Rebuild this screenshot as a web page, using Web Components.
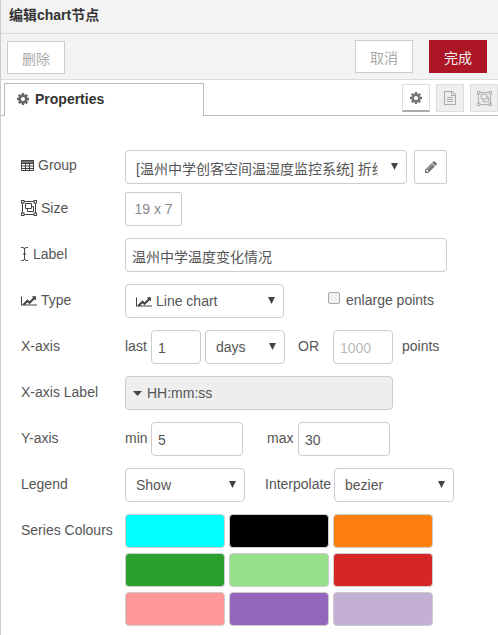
<!DOCTYPE html>
<html>
<head>
<meta charset="utf-8">
<title>编辑chart节点</title>
<style>
  html, body { margin: 0; padding: 0; background: #fff; }
  body { font-family: "Liberation Sans", "Noto Sans CJK SC", Arial, sans-serif; font-size: 14px; color: #555; }
</style>
</head>
<body>
<chart-tray>
  <tray-header slot="header">编辑chart节点</tray-header>
  <tray-toolbar slot="toolbar">
    <tray-button style="margin-top:1px">删除</tray-button>
    <span style="flex:1"></span>
    <tray-button>取消</tray-button>
    <tray-button primary style="margin-left:16px">完成</tray-button>
  </tray-toolbar>
  <tab-bar slot="tabs" label="Properties"></tab-bar>

  <form-row label="Group" icon="table" style="margin-bottom:8px;--label-top:5px">
    <field-select width="282" inner="242" style="--text-top:1px">[温州中学创客空间温湿度监控系统] 折线图</field-select>
    <icon-button style="margin-left:7px"><fa-icon name="pencil" size="14" color="#777"></fa-icon></icon-button>
  </form-row>
  <form-row label="Size" icon="group">
    <size-button>19 x 7</size-button>
  </form-row>
  <form-row label="Label" icon="cursor" style="--label-gap:5px">
    <field-input width="322" pad="6">温州中学温度变化情况</field-input>
  </form-row>
  <form-row label="Type" icon="chart">
    <field-select width="159"><fa-icon name="chart" size="14" color="#444" style="margin-right:4px"></fa-icon>Line chart</field-select>
    <check-label style="margin-left:44px">enlarge points</check-label>
  </form-row>
  <form-row label="X-axis">
    <inline-text width="26">last</inline-text>
    <field-input width="50">1</field-input>
    <field-select width="80" style="margin-left:4px">days</field-select>
    <inline-text width="48" style="padding-left:13px">OR</inline-text>
    <field-input width="60" placeholder>1000</field-input>
    <inline-text style="padding-left:9px">points</inline-text>
  </form-row>
  <form-row label="X-axis Label">
    <typed-field>HH:mm:ss</typed-field>
  </form-row>
  <form-row label="Y-axis">
    <inline-text width="26">min</inline-text>
    <field-input width="92">5</field-input>
    <inline-text width="55" style="padding-left:24px">max</inline-text>
    <field-input width="92">30</field-input>
  </form-row>
  <form-row label="Legend">
    <field-select width="120">Show</field-select>
    <inline-text width="89" style="padding-left:20px">Interpolate</inline-text>
    <field-select width="120">bezier</field-select>
  </form-row>
  <form-row label="Series Colours">
    <colour-grid colours="#00ffff,#000000,#ff7f0e,#2ca02c,#98df8a,#d62728,#ff9896,#9467bd,#c5b0d5"></colour-grid>
  </form-row>
</chart-tray>

<script>
const ICONS = {
  cog: ['0 0 1792 1792', '<path d="M1152 896q0-106-75-181t-181-75-181 75-75 181 75 181 181 75 181-75 75-181zm512-109v222q0 12-8 23t-20 13l-185 28q-19 54-39 91 35 50 107 138 10 12 10 25t-9 23q-27 37-99 108t-94 71q-12 0-26-9l-138-108q-44 23-91 38-16 136-29 186-7 28-36 28h-222q-14 0-24.500-8.500t-11.500-21.500l-28-184q-49-16-90-37l-141 107q-10 9-25 9-14 0-25-11-126-114-165-168-7-10-7-23 0-12 8-23 15-21 51-66.500t54-70.500q-27-50-41-99l-183-27q-13-2-21-12.500t-8-23.500v-222q0-12 8-23t19-13l186-28q14-46 39-92-40-57-107-138-10-12-10-24 0-10 9-23 26-36 98.500-107.500t94.500-71.500q13 0 26 10l138 107q44-23 91-38 16-136 29-186 7-28 36-28h222q14 0 24.500 8.500t11.500 21.500l28 184q49 16 90 37l142-107q9-9 24-9 13 0 25 10 129 119 165 170 7 8 7 22 0 12-8 23-15 21-51 66.500t-54 70.500q26 50 41 98l183 28q13 2 21 12.500t8 23.500z"/>'],
  chart: ['0 0 2048 1792', '<path d="M2048 1472v128h-2048v-1152h128v1024h1920zm-128-1024v435q0 21-19.500 29.500t-35.500-7.500l-121-121-633 633q-10 10-23 10t-23-10l-233-233-416 416-192-192 585-585q10-10 23-10t23 10l233 233 464-464-121-121q-16-16-7.500-35.500t29.500-19.500h435q14 0 23 9t9 23z"/>'],
  pencil: ['0 0 1792 1792', '<path d="M491 1536l91-91-235-235-91 91v107h128v128h107zm523-928q0-22-22-22-10 0-17 7l-542 542q-7 7-7 17 0 22 22 22 10 0 17-7l542-542q7-7 7-17zm-54-192l416 416-832 832h-416v-416zm683 96q0 53-37 90l-166 166-416-416 166-165q36-38 90-38 53 0 91 38l235 234q37 39 37 91z"/>'],
  file: ['0 0 1792 1792', '<path d="M1596 380q28 28 48 76t20 88v1152q0 40-28 68t-68 28h-1344q-40 0-68-28t-28-68v-1600q0-40 28-68t68-28h896q40 0 88 20t76 48zm-444-244v376h376q-10-29-22-41l-313-313q-12-12-41-22zm384 1528v-1024h-416q-40 0-68-28t-28-68v-416h-768v1536h1280zm-1024-864q0-14 9-23t23-9h704q14 0 23 9t9 23v64q0 14-9 23t-23 9h-704q-14 0-23-9t-9-23v-64zm736 224q14 0 23 9t9 23v64q0 14-9 23t-23 9h-704q-14 0-23-9t-9-23v-64q0-14 9-23t23-9h704zm0 256q14 0 23 9t9 23v64q0 14-9 23t-23 9h-704q-14 0-23-9t-9-23v-64q0-14 9-23t23-9h704z"/>'],
  table: ['0 0 13 11', '<path fill="none" stroke="currentColor" d="M.5 .5h12v10H.5zM.5 3.500h12M.5 6h12M.5 8.500h12M4.500 3.500v7M8.500 3.500v7"/><path d="M0 0h13v3H0z" opacity=".75"/>'],
  group: ['0 0 16 16', '<path fill="none" stroke="currentColor" d="M1.500 1.500h13v13h-13z"/><path fill="none" stroke="currentColor" d="M4.500 3.500h6v5h-6zM6.500 8.500v3h6v-5h-2"/><path d="M0 0h3.500v3.500H0zM12.500 0H16v3.500h-3.500zM0 12.500h3.500V16H0zM12.500 12.500H16V16h-3.500z"/><path fill="#fff" d="M1 1h1.500v1.500H1zM13.500 1H15v1.500h-1.500zM1 13.500h1.500V15H1zM13.500 13.500H15V15h-1.500z"/>'],
  cursor: ['0 0 7 14', '<path fill="none" stroke="currentColor" d="M0 .5h1.500q2 0 2 1.500v10q0 1.500-2 1.500H0M7 .5H5.500q-2 0-2 1.500v10q0 1.500 2 1.500H7M2 7h3"/>']
};

class FaIcon extends HTMLElement {
  constructor() {
    super();
    this.attachShadow({ mode: 'open' });
  }

  connectedCallback() {
    const [viewBox, body] = ICONS[this.getAttribute('name')];
    const size = this.getAttribute('size') || 14;
    const [, , w, h] = viewBox.split(' ').map(Number);
    const width = Math.round(size * w / h);
    this.shadowRoot.innerHTML = `
      <style>
        :host { display: inline-flex; align-items: center; flex: none; color: ${this.getAttribute('color') || '#444'}; }
        svg { display: block; fill: currentColor; }
      </style>
      <svg width="${width}" height="${size}" viewBox="${viewBox}">${body}</svg>
    `;
  }
}

class ChartTray extends HTMLElement {
  constructor() {
    super();
    this.attachShadow({ mode: 'open' });
    this.shadowRoot.innerHTML = `
      <style>
        :host {
          display: block;
          box-sizing: border-box;
          width: 498px;
          height: 635px;
          overflow: hidden;
          border-left: 1px solid #ccc;
          background: #fff;
        }
        .form { padding: 34px 0 0 20px; }
      </style>
      <slot name="header"></slot>
      <slot name="toolbar"></slot>
      <slot name="tabs"></slot>
      <div class="form"><slot></slot></div>
    `;
  }
}

class TrayHeader extends HTMLElement {
  constructor() {
    super();
    this.attachShadow({ mode: 'open' });
    this.shadowRoot.innerHTML = `
      <style>
        :host {
          display: block;
          box-sizing: border-box;
          height: 34px;
          padding: 5px 0 0 8px;
          line-height: 20px;
          font-size: 14px;
          font-weight: bold;
          color: #333;
          background: #f3f3f3;
          border-bottom: 1px solid #ddd;
        }
      </style>
      <slot></slot>
    `;
  }
}

class TrayToolbar extends HTMLElement {
  constructor() {
    super();
    this.attachShadow({ mode: 'open' });
    this.shadowRoot.innerHTML = `
      <style>
        :host {
          display: flex;
          align-items: flex-start;
          box-sizing: border-box;
          height: 46px;
          padding: 6px 11px 0 6px;
          background: #f3f3f3;
          border-bottom: 1px solid #ddd;
        }
      </style>
      <slot></slot>
    `;
  }
}

class TrayButton extends HTMLElement {
  constructor() {
    super();
    this.attachShadow({ mode: 'open' });
    this.shadowRoot.innerHTML = `
      <style>
        :host {
          display: flex;
          align-items: center;
          justify-content: center;
          box-sizing: border-box;
          width: 58px;
          height: 33px;
          font-size: 14px;
          color: #aaa;
          background: #fff;
          border: 1px solid #ccc;
        }
        :host([primary]) {
          color: #eee;
          background: #ad1625;
          border-color: #ad1625;
        }
      </style>
      <slot></slot>
    `;
  }
}

class TabBar extends HTMLElement {
  constructor() {
    super();
    this.attachShadow({ mode: 'open' });
    this.shadowRoot.innerHTML = `
      <style>
        :host {
          display: flex;
          box-sizing: border-box;
          height: 36px;
          padding: 3px 0 0 3px;
          border-bottom: 1px solid #bbb;
          font-size: 14px;
        }
        .tab {
          box-sizing: border-box;
          display: flex;
          align-items: center;
          gap: 5px;
          width: 200px;
          height: 33px;
          padding: 0 0 3px 11px;
          font-weight: bold;
          color: #333;
          background: #fff;
          border: 1px solid #bbb;
          border-bottom: none;
          position: relative;
          z-index: 1;
        }
        .links { display: flex; gap: 6px; margin-left: auto; }
        .link {
          box-sizing: border-box;
          display: flex;
          align-items: center;
          justify-content: center;
          width: 28px;
          height: 28px;
          margin-top: 1px;
          background: #eee;
          border: 1px solid #ddd;
        }
        .link.on { background: #fff; border-bottom: 2px solid #aaa; }
      </style>
      <div class="tab"><fa-icon name="cog" size="14" color="#666"></fa-icon><span>${this.getAttribute('label') || ''}</span></div>
      <div class="links">
        <div class="link on"><fa-icon name="cog" size="14" color="#777"></fa-icon></div>
        <div class="link"><fa-icon name="file" size="14" color="#aaa"></fa-icon></div>
        <div class="link"><fa-icon name="group" size="15" color="#aaa"></fa-icon></div>
      </div>
    `;
  }
}

class FormRow extends HTMLElement {
  constructor() {
    super();
    this.attachShadow({ mode: 'open' });
    const icon = this.getAttribute('icon');
    const sizes = { table: 11, group: 16, cursor: 14, chart: 14 };
    const iconHtml = icon ? `<fa-icon name="${icon}" size="${sizes[icon]}"></fa-icon>` : '';
    this.shadowRoot.innerHTML = `
      <style>
        :host {
          display: flex;
          align-items: flex-start;
          margin-bottom: 12px;
          font-size: 14px;
          color: #555;
        }
        label {
          display: flex;
          align-items: center;
          gap: var(--label-gap, 4px);
          flex: none;
          width: 104px;
          height: 20px;
          padding-top: var(--label-top, 6px);
          white-space: nowrap;
        }
        .body { display: flex; align-items: flex-start; }
      </style>
      <label>${iconHtml}<span>${this.getAttribute('label')}</span></label>
      <div class="body"><slot></slot></div>
    `;
  }
}

class FieldSelect extends HTMLElement {
  constructor() {
    super();
    this.attachShadow({ mode: 'open' });
    const width = this.getAttribute('width');
    const inner = this.getAttribute('inner');
    this.shadowRoot.innerHTML = `
      <style>
        :host {
          display: flex;
          align-items: center;
          box-sizing: border-box;
          flex: none;
          width: ${width}px;
          height: 34px;
          padding: 0 0 0 10px;
          background: #fff;
          border: 1px solid #ccc;
          border-radius: 4px;
          color: #555;
          position: relative;
        }
        .text {
          display: flex;
          align-items: center;
          white-space: nowrap;
          overflow: hidden;
          ${inner ? `width: ${inner}px;` : 'flex: 1;'}
          padding-top: var(--text-top, 0);
        }
        svg { position: absolute; right: 8px; top: 12px; }
      </style>
      <div class="text"><slot></slot></div>
      <svg width="7" height="7" viewBox="0 0 7 7"><path d="M0 0h7L3.500 7z" fill="#444"/></svg>
    `;
  }
}

class FieldInput extends HTMLElement {
  constructor() {
    super();
    this.attachShadow({ mode: 'open' });
    this.shadowRoot.innerHTML = `
      <style>
        :host {
          display: flex;
          align-items: center;
          box-sizing: border-box;
          flex: none;
          width: ${this.getAttribute('width')}px;
          height: 34px;
          padding: 1px 0 0 ${this.getAttribute('pad') || 6}px;
          background: #fff;
          border: 1px solid #ccc;
          border-radius: 4px;
          color: #555;
          white-space: nowrap;
        }
        :host([placeholder]) { color: #bbb; }
      </style>
      <slot></slot>
    `;
  }
}

class IconButton extends HTMLElement {
  constructor() {
    super();
    this.attachShadow({ mode: 'open' });
    this.shadowRoot.innerHTML = `
      <style>
        :host {
          display: flex;
          align-items: center;
          justify-content: center;
          box-sizing: border-box;
          flex: none;
          width: 33px;
          height: 34px;
          background: #fff;
          border: 1px solid #ccc;
          border-radius: 2px;
        }
      </style>
      <slot></slot>
    `;
  }
}

class SizeButton extends HTMLElement {
  constructor() {
    super();
    this.attachShadow({ mode: 'open' });
    this.shadowRoot.innerHTML = `
      <style>
        :host {
          display: flex;
          align-items: center;
          justify-content: center;
          box-sizing: border-box;
          width: 57px;
          height: 34px;
          color: #888;
          background: #fff;
          border: 1px solid #ccc;
          border-radius: 2px;
        }
      </style>
      <slot></slot>
    `;
  }
}

class CheckLabel extends HTMLElement {
  constructor() {
    super();
    this.attachShadow({ mode: 'open' });
    this.shadowRoot.innerHTML = `
      <style>
        :host { display: flex; align-items: flex-start; gap: 6px; height: 34px; color: #555; white-space: nowrap; }
        .box {
          box-sizing: border-box;
          width: 12px;
          height: 12px;
          margin-top: 8px;
          background: #f2f2f2;
          border: 1px solid #aaa;
          border-radius: 2px;
        }
        span { line-height: 20px; padding-top: 6px; }
      </style>
      <div class="box"></div>
      <span><slot></slot></span>
    `;
  }
}

class InlineText extends HTMLElement {
  constructor() {
    super();
    this.attachShadow({ mode: 'open' });
    const width = this.getAttribute('width');
    this.shadowRoot.innerHTML = `
      <style>
        :host {
          display: block;
          box-sizing: border-box;
          flex: none;
          ${width ? `width: ${width}px;` : ''}
          height: 34px;
          padding-top: 6px;
          line-height: 20px;
          color: #555;
          white-space: nowrap;
        }
      </style>
      <slot></slot>
    `;
  }
}

class TypedField extends HTMLElement {
  constructor() {
    super();
    this.attachShadow({ mode: 'open' });
    this.shadowRoot.innerHTML = `
      <style>
        :host {
          display: flex;
          align-items: center;
          gap: 5px;
          box-sizing: border-box;
          width: 268px;
          height: 34px;
          padding: 0 0 0 7px;
          background: #eee;
          border: 1px solid #ccc;
          border-radius: 4px;
          color: #555;
        }
      </style>
      <svg width="9" height="5" viewBox="0 0 9 5"><path d="M0 0h9L4.500 5z" fill="#444"/></svg>
      <slot></slot>
    `;
  }
}

class ColourGrid extends HTMLElement {
  constructor() {
    super();
    this.attachShadow({ mode: 'open' });
    const swatches = this.getAttribute('colours').split(',')
      .map((c) => `<div class="swatch" style="background:${c}"></div>`)
      .join('');
    this.shadowRoot.innerHTML = `
      <style>
        :host {
          display: grid;
          grid-template-columns: repeat(3, 100px);
          grid-auto-rows: 34px;
          column-gap: 4px;
          row-gap: 5px;
        }
        .swatch {
          box-sizing: border-box;
          border: 1px solid #ccc;
          border-radius: 4px;
        }
      </style>
      ${swatches}
    `;
  }
}

customElements.define('fa-icon', FaIcon);
customElements.define('chart-tray', ChartTray);
customElements.define('tray-header', TrayHeader);
customElements.define('tray-toolbar', TrayToolbar);
customElements.define('tray-button', TrayButton);
customElements.define('tab-bar', TabBar);
customElements.define('form-row', FormRow);
customElements.define('field-select', FieldSelect);
customElements.define('field-input', FieldInput);
customElements.define('icon-button', IconButton);
customElements.define('size-button', SizeButton);
customElements.define('check-label', CheckLabel);
customElements.define('inline-text', InlineText);
customElements.define('typed-field', TypedField);
customElements.define('colour-grid', ColourGrid);
</script>
</body>
</html>
